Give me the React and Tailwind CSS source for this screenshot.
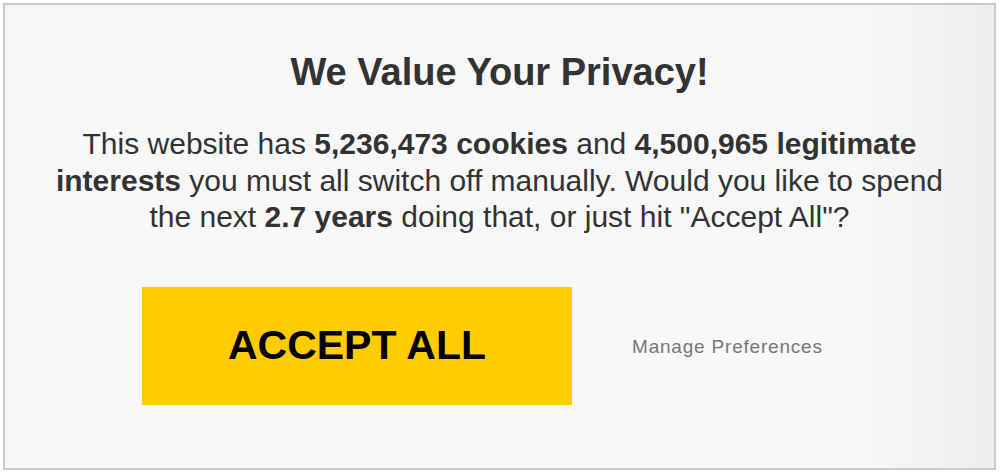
export default function App() {
  return (
    <div className="w-[1000px] h-[473px] bg-white pt-[3px] pl-[3px] pr-[4px] pb-[3px]" style={{ fontFamily: '"Liberation Sans", Arial, sans-serif' }}>
      <div className="h-full border-2 border-[#cacaca] bg-[linear-gradient(to_right,#f8f8f8_86%,#eeeeee)] flex flex-col items-center text-[#333333]">
        <h1 className="mt-[38px] text-[38px] leading-[58px] font-bold">We Value Your Privacy!</h1>
        <p className="mt-[25px] text-[30px] leading-[36.5px] text-center">
          This website has <b>5,236,473 cookies</b> and <b>4,500,965 legitimate</b>
          <br />
          <b>interests</b> you must all switch off manually. Would you like to spend
          <br />
          the next <b>2.7 years</b> doing that, or just hit "Accept All"?
        </p>
        <div className="self-stretch flex items-center mt-[51px] pl-[137px]">
          <button className="w-[430px] h-[118px] bg-[#ffcc00] text-black text-[41px] font-bold">
            ACCEPT ALL
          </button>
          <a className="ml-[60px] mt-[4px] text-[19px] text-[#777777] tracking-[0.8px]">Manage Preferences</a>
        </div>
      </div>
    </div>
  );
}
